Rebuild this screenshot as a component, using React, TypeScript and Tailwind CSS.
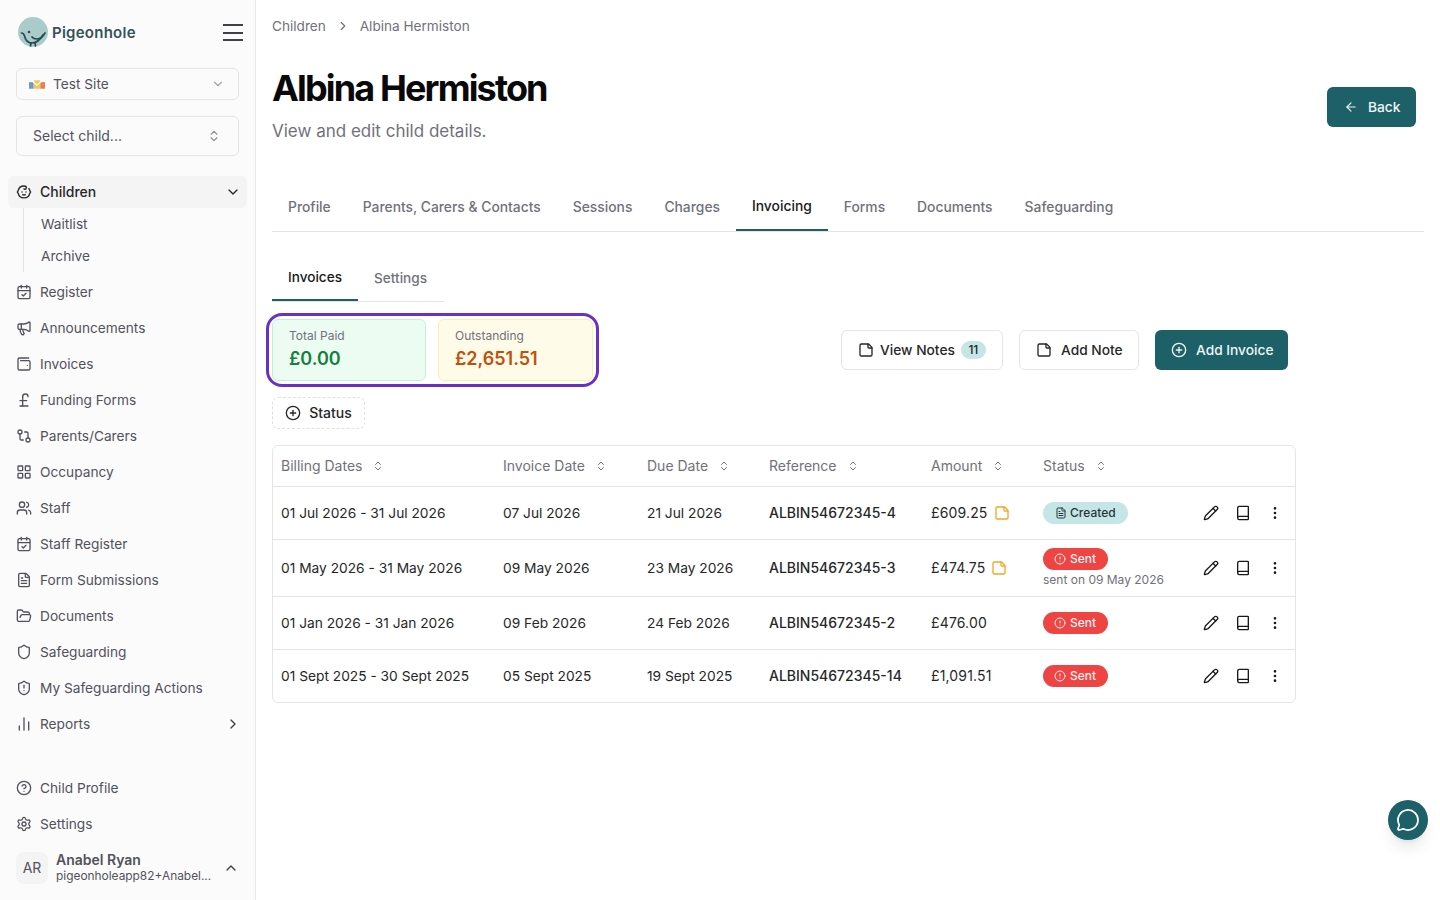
import React from 'react';
import {
  ArrowLeft,
  Baby,
  Book,
  CalendarCheck,
  ChartNoAxesColumn,
  ChevronDown,
  ChevronRight,
  ChevronUp,
  ChevronsUpDown,
  CircleAlert,
  CircleHelp,
  CirclePlus,
  EllipsisVertical,
  FileText,
  FolderOpen,
  GitCompare,
  LayoutGrid,
  Megaphone,
  MessageCircle,
  Pencil,
  PoundSterling,
  Settings,
  Shield,
  ShieldAlert,
  StickyNote,
  Users,
  WalletMinimal,
} from 'lucide-react';

type LucideIcon = typeof Baby;

const navItems: { label: string; icon: LucideIcon }[] = [
  { label: 'Register', icon: CalendarCheck },
  { label: 'Announcements', icon: Megaphone },
  { label: 'Invoices', icon: WalletMinimal },
  { label: 'Funding Forms', icon: PoundSterling },
  { label: 'Parents/Carers', icon: GitCompare },
  { label: 'Occupancy', icon: LayoutGrid },
  { label: 'Staff', icon: Users },
  { label: 'Staff Register', icon: CalendarCheck },
  { label: 'Form Submissions', icon: FileText },
  { label: 'Documents', icon: FolderOpen },
  { label: 'Safeguarding', icon: Shield },
  { label: 'My Safeguarding Actions', icon: ShieldAlert },
];

const tabs = ['Profile', 'Parents, Carers & Contacts', 'Sessions', 'Charges', 'Invoicing', 'Forms', 'Documents', 'Safeguarding'];

const rows = [
  { dates: '01 Jul 2026 - 31 Jul 2026', invoice: '07 Jul 2026', due: '21 Jul 2026', ref: 'ALBIN54672345-4', amount: '£609.25', note: true, status: 'Created', h: 'h-[53px]' },
  { dates: '01 May 2026 - 31 May 2026', invoice: '09 May 2026', due: '23 May 2026', ref: 'ALBIN54672345-3', amount: '£474.75', note: true, status: 'Sent', sentOn: 'sent on 09 May 2026', h: 'h-[57px]' },
  { dates: '01 Jan 2026 - 31 Jan 2026', invoice: '09 Feb 2026', due: '24 Feb 2026', ref: 'ALBIN54672345-2', amount: '£476.00', status: 'Sent', h: 'h-[53px]' },
  { dates: '01 Sept 2025 - 30 Sept 2025', invoice: '05 Sept 2025', due: '19 Sept 2025', ref: 'ALBIN54672345-14', amount: '£1,091.51', status: 'Sent', h: 'h-[53px]' },
];

const columns = [
  { label: 'Billing Dates', w: 'w-[222px]' },
  { label: 'Invoice Date', w: 'w-[144px]' },
  { label: 'Due Date', w: 'w-[122px]' },
  { label: 'Reference', w: 'w-[162px]' },
  { label: 'Amount', w: 'w-[112px]' },
  { label: 'Status', w: 'w-[152px]' },
];

const Logo = () => (
  <svg width="32" height="32" viewBox="0 0 32 32" fill="none">
    <defs>
      <linearGradient id="logoBg" x1="3" y1="27" x2="27" y2="5">
        <stop offset="0" stopColor="#a9c59c" />
        <stop offset="0.55" stopColor="#a9cdd0" />
        <stop offset="1" stopColor="#a6d0e4" />
      </linearGradient>
    </defs>
    <circle cx="15" cy="15" r="15" fill="url(#logoBg)" />
    <path d="M3.500 16c1.500 0 2.500 1 3 3 1 4 3.500 7 7.500 7 5 0 8-3 11-8" stroke="#264a50" strokeWidth="1.7" strokeLinecap="round" />
    <path d="M14 20c1 1.500 3 2 5 2 4 0 6-2.500 8-6" stroke="#264a50" strokeWidth="1.7" strokeLinecap="round" />
    <circle cx="11" cy="15" r="1.3" fill="#264a50" />
    <path d="M13 26l-.5 3M17 26l.5 3" stroke="#264a50" strokeWidth="1.7" strokeLinecap="round" />
  </svg>
);

const SiteIcon = () => (
  <svg width="16" height="9" viewBox="0 0 17 9">
    <rect x="0" y="2" width="5" height="7" fill="#6f9cc4" />
    <rect x="5" y="0" width="7" height="9" fill="#f6c65b" />
    <rect x="12" y="2" width="5" height="7" fill="#ea7f52" />
    <path d="M4 0l4.500 4.500L13 0v2l-4.500 4L4 2z" fill="#fff" />
  </svg>
);

const Sidebar = () => (
  <aside className="flex h-full w-[256px] shrink-0 flex-col border-r border-[#e8e8ea] bg-[#fbfbfb] text-[13.7px]">
    <div className="flex h-[68px] items-start justify-between pl-[18px] pr-[12px] pt-[17px]">
      <div className="flex items-center gap-[2px]">
        <Logo />
        <span className="text-[15px] font-semibold tracking-[0.25px] text-[#33545a]">Pigeonhole</span>
      </div>
      <div className="mt-[7px] flex h-[17px] w-[20px] flex-col justify-between">
        <span className="h-[2px] bg-[#3f3f46]" />
        <span className="h-[2px] bg-[#3f3f46]" />
        <span className="h-[2px] bg-[#3f3f46]" />
      </div>
    </div>
    <div className="mx-4 flex h-[32px] w-[223px] items-center rounded-md border border-[#e5e5e8] pl-3 pr-[13px]">
      <SiteIcon />
      <span className="ml-2 text-[#52525b]">Test Site</span>
      <ChevronDown size={14} className="ml-auto text-[#a1a1aa]" />
    </div>
    <div className="mx-4 mt-4 flex h-[40px] w-[223px] items-center justify-between rounded-md border border-[#e5e5e8] pl-4 pr-[17px]">
      <span className="text-sm text-[#52525b]">Select child...</span>
      <ChevronsUpDown size={14} className="text-[#8a8a92]" />
    </div>
    <nav className="mx-2 mt-5 flex flex-col gap-1 text-[#52525b]">
      <div>
        <div className="flex h-8 items-center gap-2 rounded-md bg-[#f4f4f5] pl-2 pr-[6px] text-sm font-medium text-[#27272a]">
          <Baby size={16} />
          <span>Children</span>
          <ChevronDown size={16} className="ml-auto" />
        </div>
        <div className="ml-[15px] flex flex-col border-l border-[#e4e4e7] pl-[17px]">
          <span className="flex h-8 items-center">Waitlist</span>
          <span className="flex h-8 items-center">Archive</span>
        </div>
      </div>
      {navItems.map(({ label, icon: Icon }) => (
        <div key={label} className="flex h-8 items-center gap-2 pl-2">
          <Icon size={16} />
          <span>{label}</span>
        </div>
      ))}
      <div className="flex h-8 items-center gap-2 pl-2 pr-[6px]">
        <ChartNoAxesColumn size={16} />
        <span>Reports</span>
        <ChevronRight size={16} className="ml-auto text-[#3f3f46]" />
      </div>
    </nav>
    <div className="mx-2 mt-auto flex flex-col gap-1 pb-4 text-[#52525b]">
      <div className="flex h-8 items-center gap-2 pl-2">
        <CircleHelp size={16} />
        <span>Child Profile</span>
      </div>
      <div className="flex h-8 items-center gap-2 pl-2">
        <Settings size={16} />
        <span>Settings</span>
      </div>
      <div className="mt-2 flex h-8 items-center pl-2 pr-[8px]">
        <div className="flex size-8 items-center justify-center rounded-lg bg-[#f4f4f5] text-sm text-[#52525b]">AR</div>
        <div className="ml-2 flex min-w-0 flex-col pb-[2px]">
          <span className="text-sm font-semibold leading-[17px] text-[#52525b]">Anabel Ryan</span>
          <span className="w-[155px] text-[11.9px] leading-[16px] text-[#52525b]">pigeonholeapp82+Anabel...</span>
        </div>
        <ChevronUp size={16} className="ml-auto text-[#3f3f46]" />
      </div>
    </div>
  </aside>
);

const SortHeader = ({ label }: { label: string }) => (
  <span className="flex items-center gap-[10px] font-normal text-[#71717a]">
    {label}
    <ChevronsUpDown size={12} className="text-[#71717a]" />
  </span>
);

const StatusBadge = ({ status }: { status: string }) =>
  status === 'Created' ? (
    <span className="inline-flex h-[22px] items-center gap-[3px] rounded-full bg-[#c5e5e6] px-3 text-xs font-medium text-[#27353a]">
      <FileText size={12} />
      Created
    </span>
  ) : (
    <span className="inline-flex h-[22px] items-center gap-[4px] rounded-full bg-[#ef4444] pl-[11px] pr-[12px] text-xs font-medium text-[#fdf0f0]">
      <CircleAlert size={12} />
      Sent
    </span>
  );

const InvoiceTable = () => (
  <div className="mt-4 w-[1024px] overflow-hidden rounded-md border border-[#e5e5e8]">
    <table className="w-full table-fixed border-collapse text-[13.75px] text-[#27272a]">
      <thead>
        <tr className="h-[40px] text-left text-sm">
          {columns.map((c) => (
            <th key={c.label} className={`${c.w} px-2 font-normal`}>
              <SortHeader label={c.label} />
            </th>
          ))}
          <th />
        </tr>
      </thead>
      <tbody>
        {rows.map((r) => (
          <tr key={r.ref} className={`${r.h} border-t border-[#e5e5e8]`}>
            <td className="px-2 pt-[2px]">{r.dates}</td>
            <td className="px-2 pt-[2px]">{r.invoice}</td>
            <td className="px-2 pt-[2px]">{r.due}</td>
            <td className="whitespace-nowrap px-2 text-sm font-medium">{r.ref}</td>
            <td className="px-2">
              <span className="flex items-center gap-[6px] text-sm tracking-[0.15px]">
                {r.amount}
                {r.note && <StickyNote size={16} className="text-[#f5a623]" />}
              </span>
            </td>
            <td className="px-2">
              <div className="flex flex-col items-start">
                <StatusBadge status={r.status} />
                {r.sentOn && <span className="mt-[2px] whitespace-nowrap text-xs leading-[16px] text-[#71717a]">{r.sentOn}</span>}
              </div>
            </td>
            <td className="pl-2 pr-1">
              <div className="flex items-center text-[#18181b]">
                <span className="flex h-8 w-8 items-center justify-center"><Pencil size={16} /></span>
                <span className="flex h-8 w-8 items-center justify-center"><Book size={16} /></span>
                <span className="flex h-8 w-8 items-center justify-center"><EllipsisVertical size={16} /></span>
              </div>
            </td>
          </tr>
        ))}
      </tbody>
    </table>
  </div>
);

const App: React.FC = () => (
  <div className="flex h-screen overflow-hidden bg-white font-['Inter',sans-serif]">
    <Sidebar />
    <main className="min-w-0 flex-1 px-4">
      <div className="flex h-[52px] items-center text-[13.6px] text-[#71717a]">
        <span>Children</span>
        <ChevronRight size={14} className="mx-[10px] text-[#71717a]" />
        <span>Albina Hermiston</span>
      </div>
      <div className="flex items-start justify-between pr-2">
        <div>
          <h1 className="mt-4 text-4xl font-bold tracking-[-1.85px] text-[#09090b]">Albina Hermiston</h1>
          <p className="mt-[9px] text-[17px] leading-[28px] text-[#71717a]">View and edit child details.</p>
        </div>
        <button className="mt-[35px] flex h-10 w-[89px] items-center gap-[10px] rounded-md bg-[#1d6068] pl-[17px] text-[13.75px] font-medium text-[#eef6f6]">
          <ArrowLeft size={14} />
          Back
        </button>
      </div>

      <div className="mt-[38px] flex h-[49px] border-b border-[#e4e4e7] text-[13.85px] font-medium text-[#71717a]">
        {tabs.map((t) => (
          <span
            key={t}
            className={t === 'Invoicing' ? 'flex items-center border-b-2 border-[#1d6068] px-4 text-[#18181b]' : 'flex items-center px-4'}
          >
            {t}
          </span>
        ))}
      </div>

      <div className="mt-[23px] flex h-[47px] w-[172px] border-b border-[#e4e4e7] text-[13.6px] font-medium text-[#71717a]">
        <span className="flex items-center border-b-2 border-[#1d6068] px-4 text-[#18181b]">Invoices</span>
        <span className="flex items-center px-4">Settings</span>
      </div>

      <div className="mt-[17px] flex w-[1016px] items-center justify-between">
        <div className="flex w-[321px] gap-3 rounded-[10px] outline-[3px] outline-offset-[3px] outline-[#6a2fc4]">
          <div className="h-[62px] w-[154px] rounded-md border border-[#c4efd8] bg-[#edfcf3] px-4 py-2">
            <div className="text-xs leading-[16px] text-[#71717a]">Total Paid</div>
            <div className="text-lg font-semibold leading-[30px] text-[#15803d]">£0.00</div>
          </div>
          <div className="h-[62px] w-[155px] rounded-md border border-[#fdeeb0] bg-[#fefbe9] px-4 py-2">
            <div className="text-xs leading-[16px] text-[#71717a]">Outstanding</div>
            <div className="text-lg font-semibold leading-[30px] text-[#c2500c]">£2,651.51</div>
          </div>
        </div>
        <div className="flex items-center gap-4 text-[13.75px] font-medium">
          <button className="flex h-10 w-[162px] items-center gap-[6px] rounded-md border border-[#e5e5e8] pl-4 text-[#27272a]">
            <StickyNote size={16} />
            View Notes
            <span className="flex h-[18px] w-[25px] items-center justify-center rounded-full bg-[#c5e5e6] text-xs">11</span>
          </button>
          <button className="flex h-10 w-[120px] items-center gap-[9px] rounded-md border border-[#e5e5e8] pl-4 text-[#27272a]">
            <StickyNote size={16} />
            Add Note
          </button>
          <button className="flex h-10 w-[133px] items-center gap-[9px] rounded-md bg-[#1d6068] pl-4 text-[#eef6f6]">
            <CirclePlus size={16} />
            Add Invoice
          </button>
        </div>
      </div>

      <button className="mt-[16px] flex h-8 w-[93px] items-center justify-center gap-2 rounded-md border border-dashed border-[#e0e0e4] text-sm font-medium text-[#27272a]">
        <CirclePlus size={16} />
        Status
      </button>

      <InvoiceTable />
    </main>

    <div className="fixed bottom-[60px] right-[12px] flex size-10 items-center justify-center rounded-full bg-[#1d6068] text-white shadow-lg">
      <MessageCircle size={24} strokeWidth={1.75} />
    </div>
  </div>
);

export default App;
